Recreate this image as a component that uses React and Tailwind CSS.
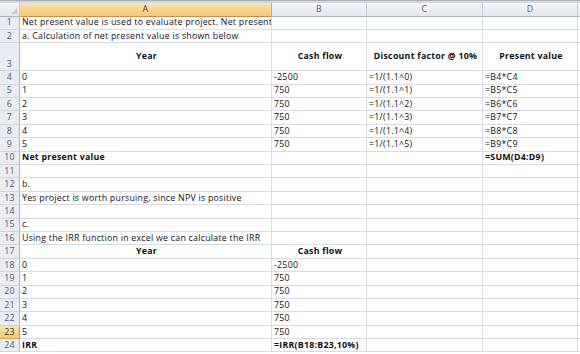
import React from "react";

const ROW = "grid grid-cols-[20px_252px_95px_116px_95px_2px]";

const data = [
  { n: 1, a: "Net present value is used to evaluate project. Net present value of project is positive" },
  { n: 2, a: "a. Calculation of net present value is shown below" },
  { n: 3, tall: true, a: "Year", b: "Cash flow", c: "Discount factor @ 10%", d: "Present value", bold: true, center: true },
  { n: 4, a: "0", b: "-2500", c: "=1/(1.1^0)", d: "=B4*C4" },
  { n: 5, a: "1", b: "750", c: "=1/(1.1^1)", d: "=B5*C5" },
  { n: 6, a: "2", b: "750", c: "=1/(1.1^2)", d: "=B6*C6" },
  { n: 7, a: "3", b: "750", c: "=1/(1.1^3)", d: "=B7*C7" },
  { n: 8, a: "4", b: "750", c: "=1/(1.1^4)", d: "=B8*C8" },
  { n: 9, a: "5", b: "750", c: "=1/(1.1^5)", d: "=B9*C9" },
  { n: 10, a: "Net present value", d: "=SUM(D4:D9)", bold: true },
  { n: 11 },
  { n: 12, a: "b." },
  { n: 13, a: "Yes project is worth pursuing, since NPV is positive" },
  { n: 14 },
  { n: 15, a: "c." },
  { n: 16, a: "Using the IRR function in excel we can calculate the IRR" },
  { n: 17, a: "Year", b: "Cash flow", bold: true, center: true },
  { n: 18, a: "0", b: "-2500" },
  { n: 19, a: "1", b: "750" },
  { n: 20, a: "2", b: "750" },
  { n: 21, a: "3", b: "750" },
  { n: 22, a: "4", b: "750" },
  { n: 23, a: "5", b: "750", active: true },
  { n: 24, a: "IRR", b: "=IRR(B18:B23,10%)", bold: true },
];

function Cell({ text, bold, center }) {
  return (
    <div
      className={`flex items-center overflow-hidden whitespace-nowrap border-r border-b border-[#d9dde3] bg-white pl-[2px] ${
        center ? "justify-center" : "justify-start"
      } ${bold ? "font-bold" : "font-normal"}`}
    >
      {text || ""}
    </div>
  );
}

function HeadCell({ label, active }) {
  return (
    <div
      className={`flex items-center justify-center border-r border-b ${
        active
          ? "bg-gradient-to-b from-[#fbe3b4] to-[#f3c977] border-r-[#d8a85a] border-b-[#c9923f] text-[#3a3a3a]"
          : "bg-gradient-to-b from-[#f4f6f9] to-[#e3e7ed] border-r-[#c4ccd6] border-b-[#a9b5c4] text-[#4d5d72]"
      }`}
    >
      {label}
    </div>
  );
}

function SheetRow({ r }) {
  const h = r.tall ? "h-[28px]" : "h-[13.4px]";
  return (
    <div className={`${ROW} ${h}`}>
      <div
        className={`flex justify-center border-r border-b ${
          r.tall ? "items-end pb-[1px]" : "items-center"
        } ${
          r.active
            ? "bg-gradient-to-b from-[#fbe3b4] to-[#f3c977] border-r-[#c9923f] border-b-[#d8a85a] text-[#3a3a3a]"
            : "bg-[#e9edf2] border-r-[#a9b5c4] border-b-[#cfd6df] text-[#4d5d72]"
        }`}
      >
        {r.n}
      </div>
      <Cell text={r.a} bold={r.bold} center={r.center} />
      <Cell text={r.b} bold={r.bold} center={r.center} />
      <Cell text={r.c} bold={r.bold} center={r.center} />
      <Cell text={r.d} bold={r.bold} center={r.center} />
      <div className="border-b border-[#d9dde3] bg-white" />
    </div>
  );
}

export default function App() {
  return (
    <div
      className="w-[580px] h-[354px] overflow-hidden bg-white text-[8.8px] leading-none tracking-[0.25px] text-[#111]"
      style={{ fontFamily: '"Open Sans", "Liberation Sans", sans-serif' }}
    >
      <div className="h-[3px] border-t border-[#a9b0b9] bg-[#d6d9dd]" />
      <div className={`${ROW} h-[13.5px]`}>
        <div className="relative border-r border-b border-r-[#c4ccd6] border-b-[#a9b5c4] bg-gradient-to-b from-[#f4f6f9] to-[#e3e7ed]">
          <svg className="absolute right-[2px] bottom-[2px]" width="6" height="6" viewBox="0 0 6 6">
            <polygon points="6,0 6,6 0,6" fill="#c6ccd4" />
          </svg>
        </div>
        <HeadCell label="A" active />
        <HeadCell label="B" />
        <HeadCell label="C" />
        <HeadCell label="D" />
        <div className="border-b border-b-[#a9b5c4] bg-gradient-to-b from-[#f4f6f9] to-[#e3e7ed]" />
      </div>
      {data.map((r) => (
        <SheetRow key={r.n} r={r} />
      ))}
    </div>
  );
}
